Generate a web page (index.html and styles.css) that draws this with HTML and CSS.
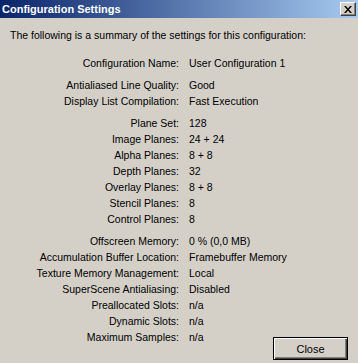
FILE: index.html
```html
<!DOCTYPE html>
<html lang="en">
<head>
    <meta charset="UTF-8">
    <title>Configuration Settings</title>
    <link rel="stylesheet" href="styles.css">
</head>
<body>
    <div class="window">
        <div class="titlebar">
            <span class="title">Configuration Settings</span>
            <button class="title-close" aria-label="Close">
                <svg width="8" height="7" viewBox="0 0 8 7">
                    <path d="M0 0h2l2 2.5L6 0h2L5 3.5 8 7H6L4 4.5 2 7H0l3-3.5z" fill="#000"/>
                </svg>
            </button>
        </div>
        <div class="content">
            <p class="intro">The following is a summary of the settings for this configuration:</p>
            <div class="summary">
                <div class="row"><span class="label">Configuration Name:</span><span class="value">User Configuration 1</span></div>

                <div class="row sep"><span class="label">Antialiased Line Quality:</span><span class="value">Good</span></div>
                <div class="row"><span class="label">Display List Compilation:</span><span class="value">Fast Execution</span></div>

                <div class="row sep"><span class="label">Plane Set:</span><span class="value">128</span></div>
                <div class="row"><span class="label">Image Planes:</span><span class="value">24 + 24</span></div>
                <div class="row"><span class="label">Alpha Planes:</span><span class="value">8 + 8</span></div>
                <div class="row"><span class="label">Depth Planes:</span><span class="value">32</span></div>
                <div class="row"><span class="label">Overlay Planes:</span><span class="value">8 + 8</span></div>
                <div class="row"><span class="label">Stencil Planes:</span><span class="value">8</span></div>
                <div class="row"><span class="label">Control Planes:</span><span class="value">8</span></div>

                <div class="row sep"><span class="label">Offscreen Memory:</span><span class="value">0 % (0,0 MB)</span></div>
                <div class="row"><span class="label">Accumulation Buffer Location:</span><span class="value">Framebuffer Memory</span></div>
                <div class="row"><span class="label">Texture Memory Management:</span><span class="value">Local</span></div>
                <div class="row"><span class="label">SuperScene Antialiasing:</span><span class="value">Disabled</span></div>
                <div class="row"><span class="label">Preallocated Slots:</span><span class="value">n/a</span></div>
                <div class="row"><span class="label">Dynamic Slots:</span><span class="value">n/a</span></div>
                <div class="row"><span class="label">Maximum Samples:</span><span class="value">n/a</span></div>
            </div>
            <div class="actions">
                <button class="btn default">Close</button>
            </div>
        </div>
    </div>
</body>
</html>
```

FILE: styles.css
```css
body {
    margin: 0;
    background-color: #d4d0c8;
    font-family: "Liberation Sans", Arial, sans-serif;
    font-size: 10.5px;
    color: #000;
}

.window {
    width: 358px;
    height: 363px;
    display: flex;
    flex-direction: column;
    background-color: #d4d0c8;
    overflow: hidden;
}

.titlebar {
    height: 18px;
    flex-shrink: 0;
    display: flex;
    align-items: center;
    justify-content: space-between;
    padding: 0 2px 0 2px;
    background: linear-gradient(to right, #0a246a, #a6caf0);
}

.title {
    color: #fff;
    font-family: "Liberation Sans", Arial, sans-serif;
    font-weight: bold;
    font-size: 11px;
}

.title-close {
    width: 16px;
    height: 14px;
    padding: 0;
    margin: 0;
    display: flex;
    align-items: center;
    justify-content: center;
    background-color: #d4d0c8;
    border: 1px solid;
    border-color: #fff #404040 #404040 #fff;
    box-shadow: inset -1px -1px 0 #808080;
}

/* summary and button share the lower cell, button sits bottom-right */
.content {
    flex: 1;
    min-height: 0;
    display: grid;
    grid-template-rows: auto 1fr;
    grid-template-columns: 1fr;
    padding: 9px 0 0 10px;
}

.intro {
    margin: 0;
    line-height: 16px;
    grid-row: 1;
    grid-column: 1;
}

.summary {
    grid-row: 2;
    grid-column: 1;
    align-self: start;
    margin-top: 12px;
}

.row {
    display: flex;
    height: 16px;
    line-height: 16px;
}

.row.sep {
    margin-top: 6px;
}

.label {
    width: 169px;
    text-align: right;
    white-space: nowrap;
}

.value {
    margin-left: 10px;
    white-space: nowrap;
}

.actions {
    grid-row: 2;
    grid-column: 1;
    align-self: end;
    justify-self: end;
    margin: 0 10px 3px 0;
}

.btn {
    display: block;
    width: 75px;
    height: 23px;
    font-family: "Liberation Sans", Arial, sans-serif;
    font-size: 11px;
    background-color: #d4d0c8;
    border: 1px solid #000;
    box-shadow: inset 1px 1px 0 #fff, inset -1px -1px 0 #404040, inset -2px -2px 0 #808080;
    padding: 0;
}
```
